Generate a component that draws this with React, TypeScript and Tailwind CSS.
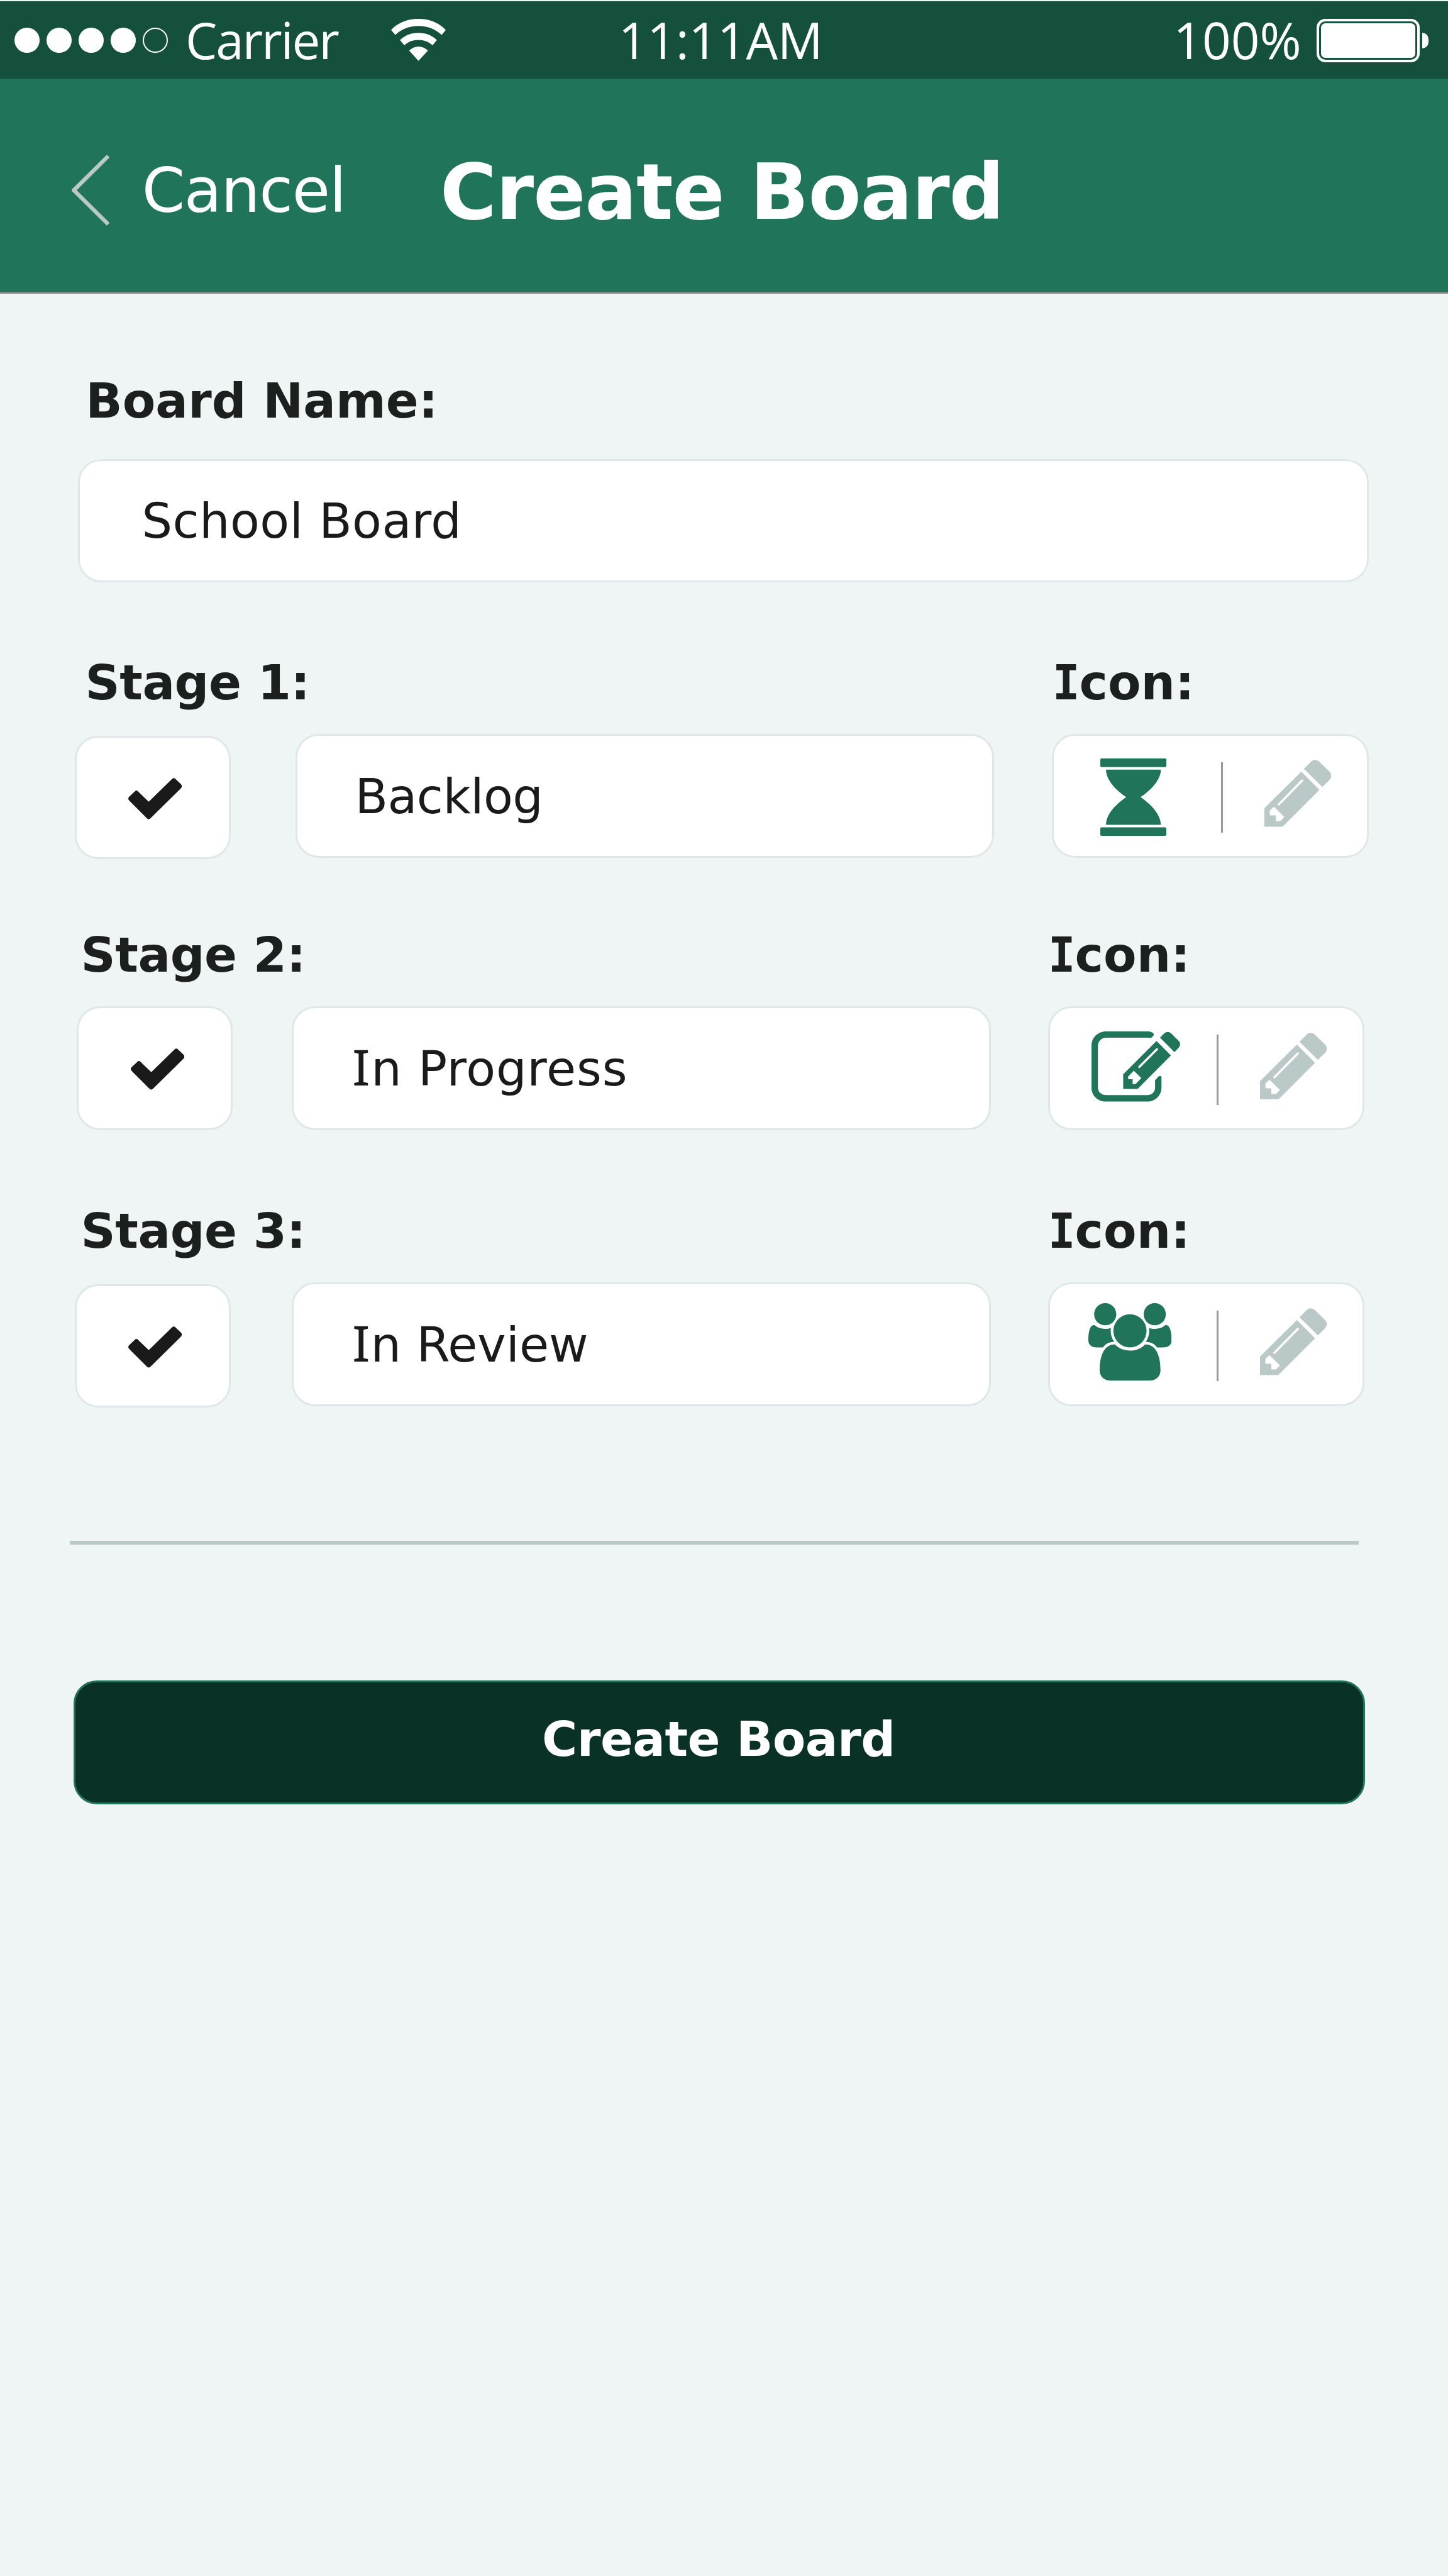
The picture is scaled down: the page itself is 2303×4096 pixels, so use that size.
import type { ReactNode } from "react";

const BOX = "box-border rounded-[37px] border-[3px] border-[#dfe8e6] bg-white";

function WifiIcon() {
  return (
    <svg className="ml-[82px] mt-[28px] h-[67px] w-[87px] shrink-0" viewBox="0 0 87 67" fill="#fff">
      <path d="M0 17.7C11 6 26 0 43.5 0S76 6 87 17.7L80.3 25.4C70 16 57.5 11.3 43.5 11.3S17 16 6.8 25.4Z" />
      <path d="M14.2 33.8C22 26 32 22.3 43.5 22.3S65 26 72.8 33.8L66 41.9C59.5 36.3 52 33.5 43.5 33.5S27.5 36.3 21 41.9Z" />
      <path d="M28.8 50.6C33 46.2 38 44 43.5 44S54.5 46.2 58.7 50.6L43.5 66.7Z" />
    </svg>
  );
}

function Battery() {
  return (
    <div className="ml-[27px] mt-[27.7px] flex items-center">
      <div className="h-[69.8px] w-[164.5px] rounded-[14px] border-[4px] border-white p-[3.4px]">
        <div className="h-full w-full rounded-[7px] bg-white" />
      </div>
      <div className="ml-[3.8px] h-[25.6px] w-[10.5px] rounded-r-full bg-white" />
    </div>
  );
}

function StatusBar() {
  return (
    <div className="flex h-[123px] items-start bg-[#14503c] font-['Open_Sans',sans-serif] text-[80px] leading-[80px] text-white">
      <div className="ml-[22.5px] mt-[42.4px] flex gap-[11.1px]">
        <i className="size-[40.1px] rounded-full bg-white" />
        <i className="size-[40.1px] rounded-full bg-white" />
        <i className="size-[40.1px] rounded-full bg-white" />
        <i className="size-[40.1px] rounded-full bg-white" />
        <i className="size-[40.1px] rounded-full border-2 border-white" />
      </div>
      <span className="ml-[27.7px] mt-[21px] w-[244.8px] whitespace-nowrap tracking-[-2.2px]">Carrier</span>
      <WifiIcon />
      <span className="ml-[275px] mt-[21px] w-[882.5px] whitespace-nowrap tracking-[-0.27px]">11:11AM</span>
      <span className="mt-[21px] w-[200.2px] whitespace-nowrap">100%</span>
      <Battery />
    </div>
  );
}

function Header() {
  return (
    <div className="flex h-[342px] items-start border-b-[3.5px] border-[#878c8a] bg-[#1f7459] text-white">
      <svg className="ml-[113.9px] mt-[121.4px] h-[112.8px] w-[60.4px] shrink-0" viewBox="0 0 60.4 112.8" fill="#bac8c7">
        <path d="M55.9 0L60.4 4.3L8 56.4L60.4 108.5L55.9 112.8L1 58.6Q-1.2 56.4 1 54.2Z" />
      </svg>
      <span className="ml-[51.4px] mt-[128px] w-[474.3px] whitespace-nowrap text-[98px] leading-[100px] tracking-[-1.36px]">
        Cancel
      </span>
      <h1 className="mt-[121.3px] whitespace-nowrap text-[122.5px] font-bold leading-[120px] tracking-[-1.03px]">
        Create Board
      </h1>
    </div>
  );
}

function CheckIcon() {
  return (
    <svg className="h-[65.7px] w-[85.4px]" viewBox="0 0 85.4 65.7" fill="#1a1a1a">
      <path d="M10.3 21.5Q13 18.5 15.6 21.5L32.6 37.8L69.7 1.4Q72.4 -1 75 1.4L83.2 9.3Q87.4 13 83.2 17L35 64.6Q32.6 66.6 30 64.6L2 36.6Q-2 32.7 2 29.2Z" />
    </svg>
  );
}

function HourglassIcon() {
  return (
    <svg className="ml-[74.1px] mt-[36.3px] h-[123px] w-[105px]" viewBox="0 0 105 123" fill="#1f7459">
      <rect width="105" height="13.7" rx="2" />
      <rect y="109.4" width="105" height="13.6" rx="2" />
      <path d="M9 17.7H96.3C96.3 34 80 51 63.9 61.6C80 72 96.3 89 96.3 105.4H9C9 89 25 72 41.4 61.6C25 51 9 34 9 17.7Z" />
    </svg>
  );
}

function EditIcon() {
  return (
    <svg className="ml-[66.2px] mt-[37px] h-[111.6px] w-[141.2px] overflow-visible" viewBox="0 0 141.2 111.6">
      <path
        fill="#1f7459"
        d="M23.3 0H89C94 0 98.5 1.8 99.3 5C98.7 7.5 96 9.7 93.6 10.8Q92.3 10.1 90.6 10.1H23.3C16 10.1 10.2 16 10.2 22.8V89.4C10.2 96 16 101.2 23.3 101.2H88.6C96 101.2 101.1 96 101.1 89.4V77.6L106.6 71.8C108.5 70 111.3 71 111.3 73V89.4C111.3 102 101 111.5 88.6 111.5H23.3C10 111.5 0 102 0 89.4V22.8C0 10 10 0 23.3 0Z"
      />
      <path
        fill="#1f7459"
        d="M50.4 68.3L103.4 15.2L126.3 38.3L73.3 91.4H50.4ZM109 10.1L115.8 2.9Q121 -1.5 126.3 2.7L139.1 15.5Q143 20.4 139.1 25.3L132 32.9Z"
      />
      <path fill="#fff" d="M67.3 62.6L79.3 74.2L70 83.8H65.4V75.9H58.3V71.7Z" />
      <path stroke="#fff" strokeWidth="3.4" strokeLinecap="round" d="M76 56.5L104.2 28.3" />
    </svg>
  );
}

function PeopleIcon() {
  return (
    <svg className="ml-[61.3px] mt-[30.4px] h-[123.3px] w-[132.4px]" viewBox="0 0 132.4 123.3" fill="#1f7459">
      <circle cx="26.8" cy="17.7" r="17.6" />
      <circle cx="105.6" cy="17.7" r="17.6" />
      <circle cx="66.2" cy="44.1" r="26.4" />
      <path d="M42.5 65.9C48 72 56.5 75.5 66.2 75.5C76 75.5 84 72 90 65.9C104 65 114.7 78 114.7 107C114.7 117 107 123.3 97 123.3H35.7C25.5 123.3 18 117 18 107C18 78 29 65 42.5 65.9Z" />
      <path d="M9.8 35.1C14 39 20 41 26.7 41C30 41 33 40.6 35.7 39.5C35 47.5 36.5 55 41 61.6C33.5 62 27.5 64.5 23.3 70.5H13.2C5 70.5 0 66 0 59.5C0 46 2.5 34 9.8 35.1Z" />
      <path
        transform="translate(132.4 0) scale(-1 1)"
        d="M9.8 35.1C14 39 20 41 26.7 41C30 41 33 40.6 35.7 39.5C35 47.5 36.5 55 41 61.6C33.5 62 27.5 64.5 23.3 70.5H13.2C5 70.5 0 66 0 59.5C0 46 2.5 34 9.8 35.1Z"
      />
    </svg>
  );
}

function PencilIcon() {
  return (
    <svg className="ml-[65.8px] mt-[38.4px] h-[106.4px] w-[106.4px] shrink-0" viewBox="0 0 106.4 106.4">
      <path
        fill="#bac8c7"
        d="M0 76.9L58.7 18.9L87.6 47.9L29 106.4H0ZM62.8 14.5L74.8 2.4Q80.5 -2.2 86.9 2.7L103.8 19.2Q109 25.8 103.8 31.7L92.1 43.2Z"
      />
      <path fill="#fff" d="M15 74.7L31.6 91.1L25.6 97.5H18V88.4H8.6V80.8Z" />
      <path stroke="#fff" strokeWidth="3.4" strokeLinecap="round" d="M22.9 71L60.2 33" />
    </svg>
  );
}

/* Capital I with slab serifs, set in a companion face beside the sans text. */
function BoldI() {
  return (
    <span className="-ml-[5.6px] inline-block origin-left scale-x-[0.942] font-['DejaVu_Sans_Mono',monospace] tracking-[-3.6px]">
      I
    </span>
  );
}

function RegularI() {
  return (
    <span className="-ml-[2.6px] mr-[3.3px] inline-block origin-left scale-x-[1.08] font-['Noto_Sans',sans-serif] text-[78.2px] leading-[60px]">
      I
    </span>
  );
}

type StageProps = {
  label: string;
  className: string;
  labelClass: string;
  checkClass: string;
  inputClass: string;
  icon: ReactNode;
  children: ReactNode;
};

function Stage({ label, className, labelClass, checkClass, inputClass, icon, children }: StageProps) {
  return (
    <section className={className}>
      <div className={`flex h-[80px] font-bold leading-[80px] text-[#1b201f] ${labelClass}`}>
        <span className="w-[1544.1px] tracking-[-0.45px]">{label}</span>
        <span className="whitespace-nowrap">
          <BoldI />
          con:
        </span>
      </div>
      <div className="mt-[41.5px] flex h-[196.6px] items-start">
        <div className={`${BOX} h-[196.6px] w-[248px] shrink-0 pl-[82.5px] pt-[64.3px] ${checkClass}`}>
          <CheckIcon />
        </div>
        <div className={`${BOX} flex h-[196.6px] w-[1111.3px] shrink-0 items-center whitespace-pre pt-[3px] text-[#1a1a1a] ${inputClass}`}>
          <span>{children}</span>
        </div>
        <div className={`${BOX} ml-[91px] flex h-[196.6px] w-[503.8px] shrink-0 items-start`}>
          <div className="w-[265.8px] shrink-0">{icon}</div>
          <div className="mt-[41.8px] h-[112px] w-[3px] shrink-0 bg-[#999999]" />
          <PencilIcon />
        </div>
      </div>
    </section>
  );
}

export default function App() {
  return (
    <div className="flex h-[4096px] w-[2303px] flex-col overflow-hidden bg-[#eff5f5] pt-[2px] font-['DejaVu_Sans',sans-serif] text-[76.6px] leading-[80px]">
      <StatusBar />
      <Header />
      <main className="flex flex-col">
        <label className="ml-[136.3px] mt-[131px] h-[80px] font-bold text-[#1b201f]">Board Name:</label>
        <div className={`${BOX} ml-[123.5px] mt-[51.6px] flex h-[196.6px] w-[2053.5px] items-center pl-[99px] pt-[3px] tracking-[0.43px] text-[#1a1a1a]`}>
          School Board
        </div>
        <Stage
          label="Stage 1:"
          className="mt-[119.4px]"
          labelClass="ml-[135.5px]"
          checkClass="ml-[118.6px] mt-[2.5px]"
          inputClass="ml-[103px] mr-[1.3px] pl-[91.8px] tracking-[-0.53px]"
          icon={<HourglassIcon />}
        >
          Backlog
        </Stage>
        <Stage
          label="Stage 2:"
          className="mt-[115px]"
          labelClass="ml-[128.6px]"
          checkClass="ml-[122.1px]"
          inputClass="ml-[94.2px] pl-[95px] tracking-[0.83px]"
          icon={<EditIcon />}
        >
          <RegularI />n Progress
        </Stage>
        <Stage
          label="Stage 3:"
          className="mt-[120.8px]"
          labelClass="ml-[128.6px]"
          checkClass="ml-[118.8px] mt-[2.5px]"
          inputClass="ml-[97.5px] pl-[95px]"
          icon={<PeopleIcon />}
        >
          <RegularI />n Review
        </Stage>
        <hr className="ml-[111.2px] mt-[214.2px] h-[6px] w-[2049.6px] border-0 bg-[#bac8c7]" />
        <button className="ml-[116.6px] mt-[216px] flex h-[196.8px] w-[2054.3px] items-center justify-center rounded-[37px] border-[3px] border-[#1f7459] bg-[#0a3126] pb-[9px] pr-[2px] font-bold tracking-[-0.57px] text-white">
          Create Board
        </button>
      </main>
    </div>
  );
}
